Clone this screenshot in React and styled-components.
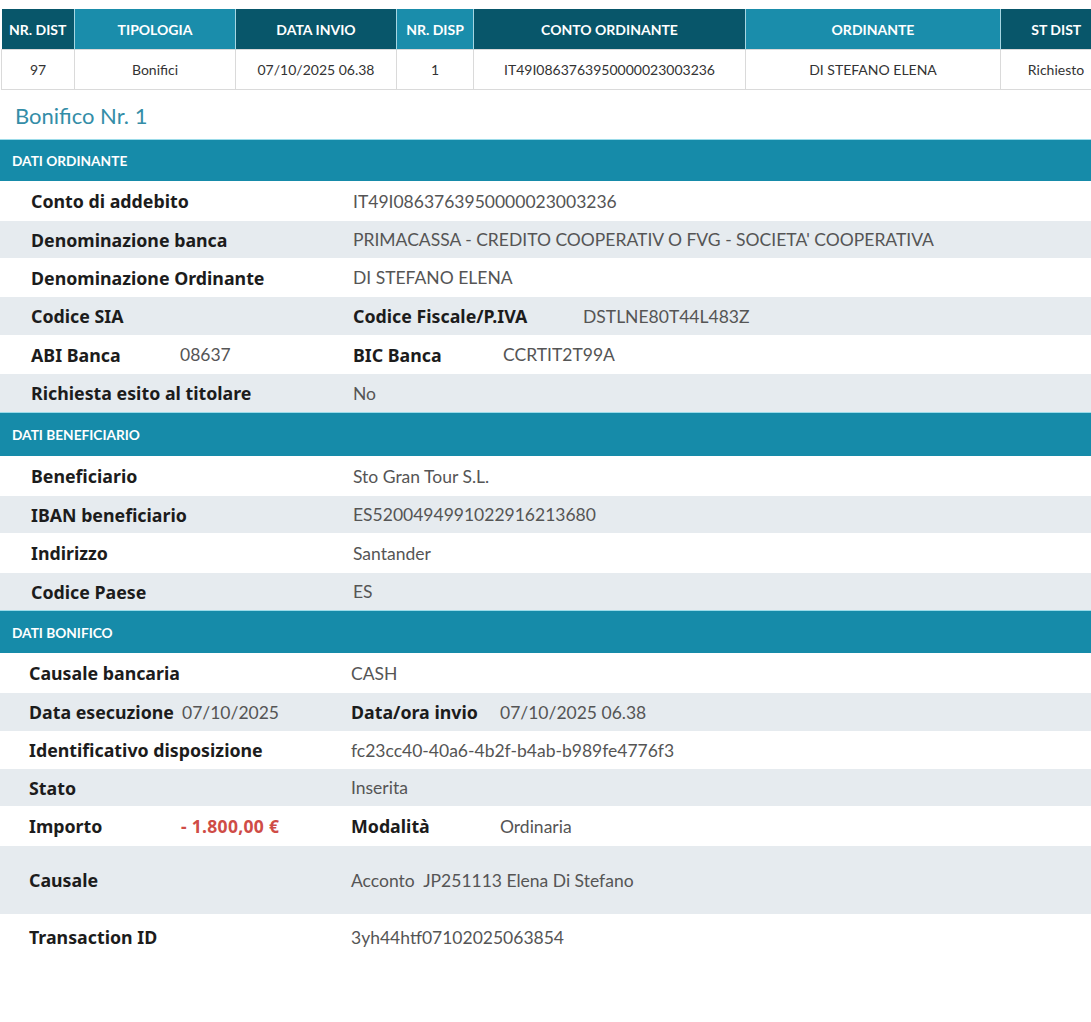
import React from 'react';
import styled, { createGlobalStyle } from 'styled-components';

const Global = createGlobalStyle`
  html, body { margin: 0; padding: 0; background: #fff; }
  body { font-family: Lato, "Open Sans", sans-serif; overflow: hidden; }
`;

const Page = styled.div`
  width: 1091px;
  overflow: hidden;
  padding-top: 9px;
`;

const TopTable = styled.table`
  border-collapse: collapse;
  table-layout: fixed;
  width: 1110px;
  margin-left: 1px;
`;

const Th = styled.th`
  background: ${p => (p.$dark ? '#08566a' : '#1a8dab')};
  color: #fff;
  font-weight: 700;
  font-size: 14px;
  height: 40px;
  padding: 0;
  text-align: center;
  border-left: 1px solid #a6d6e2;
  white-space: nowrap;
  &:first-child { border-left: none; }
`;

const Td = styled.td`
  height: 39px;
  font-size: 14px;
  color: #333;
  text-align: center;
  border: 1px solid #dadada;
  padding: 0;
  white-space: nowrap;
`;

const Title = styled.h2`
  margin: 0;
  height: 49px;
  display: flex;
  align-items: center;
  padding-left: 15px;
  padding-top: 1px;
  box-sizing: border-box;
  font-weight: 400;
  font-size: 22px;
  color: #348da7;
`;

const SectionBar = styled.div`
  box-sizing: border-box;
  height: ${p => p.$h}px;
  background: #168ba9;
  border-top: 1px solid #9bdbe9;
  display: flex;
  align-items: center;
  padding-left: 12px;
  color: #fff;
  font-weight: 700;
  font-size: 13.7px;
  text-transform: uppercase;
`;

const Row = styled.div`
  display: flex;
  align-items: center;
  height: ${p => p.$h}px;
  background: ${p => (p.$alt ? '#e6ebef' : '#fff')};
  padding-left: ${p => p.$indent}px;
`;

const Label = styled.div`
  flex: none;
  width: ${p => (p.$w ? `${p.$w}px` : 'auto')};
  font-family: "Noto Sans", "Open Sans", sans-serif;
  font-weight: 700;
  font-size: 17.8px;
  color: #1c1c1c;
  white-space: nowrap;
`;

const Value = styled.div`
  flex: none;
  width: ${p => (p.$w ? `${p.$w}px` : 'auto')};
  font-size: 17.5px;
  color: #555;
  white-space: nowrap;
`;

const Amount = styled(Value)`
  font-family: "Noto Sans", "Open Sans", sans-serif;
  color: #cf4c46;
  font-weight: 700;
  font-size: 17.5px;
  letter-spacing: 0.3px;
`;

const columns = [
  { t: 'NR. DIST', w: 73, dark: true, v: '97' },
  { t: 'TIPOLOGIA', w: 161, v: 'Bonifici' },
  { t: 'DATA INVIO', w: 161, dark: true, v: '07/10/2025 06.38' },
  { t: 'NR. DISP', w: 77, v: '1' },
  { t: 'CONTO ORDINANTE', w: 272, dark: true, v: 'IT49I0863763950000023003236' },
  { t: 'ORDINANTE', w: 255, v: 'DI STEFANO ELENA' },
  { t: 'ST DIST', w: 111, dark: true, v: 'Richiesto' },
];

export default function App() {
  return (
    <Page>
      <Global />
      <TopTable>
        <colgroup>
          {columns.map(c => <col key={c.t} style={{ width: c.w }} />)}
        </colgroup>
        <thead>
          <tr>
            {columns.map(c => <Th key={c.t} $dark={c.dark}>{c.t}</Th>)}
          </tr>
        </thead>
        <tbody>
          <tr>
            {columns.map(c => <Td key={c.t}>{c.v}</Td>)}
          </tr>
        </tbody>
      </TopTable>

      <Title>Bonifico Nr. 1</Title>

      <SectionBar $h={42}>Dati ordinante</SectionBar>
      <Row $h={40} $indent={31}>
        <Label $w={322}>Conto di addebito</Label>
        <Value>IT49I0863763950000023003236</Value>
      </Row>
      <Row $h={37} $indent={31} $alt>
        <Label $w={322}>Denominazione banca</Label>
        <Value>PRIMACASSA - CREDITO COOPERATIV O FVG - SOCIETA' COOPERATIVA</Value>
      </Row>
      <Row $h={39} $indent={31}>
        <Label $w={322}>Denominazione Ordinante</Label>
        <Value>DI STEFANO ELENA</Value>
      </Row>
      <Row $h={38} $indent={31} $alt>
        <Label $w={322}>Codice SIA</Label>
        <Label $w={230}>Codice Fiscale/P.IVA</Label>
        <Value>DSTLNE80T44L483Z</Value>
      </Row>
      <Row $h={39} $indent={31}>
        <Label $w={149}>ABI Banca</Label>
        <Value $w={173}>08637</Value>
        <Label $w={150}>BIC Banca</Label>
        <Value>CCRTIT2T99A</Value>
      </Row>
      <Row $h={38} $indent={31} $alt>
        <Label $w={322}>Richiesta esito al titolare</Label>
        <Value>No</Value>
      </Row>

      <SectionBar $h={44}>Dati beneficiario</SectionBar>
      <Row $h={40} $indent={31}>
        <Label $w={322}>Beneficiario</Label>
        <Value>Sto Gran Tour S.L.</Value>
      </Row>
      <Row $h={37} $indent={31} $alt>
        <Label $w={322}>IBAN beneficiario</Label>
        <Value>ES5200494991022916213680</Value>
      </Row>
      <Row $h={40} $indent={31}>
        <Label $w={322}>Indirizzo</Label>
        <Value>Santander</Value>
      </Row>
      <Row $h={37} $indent={31} $alt>
        <Label $w={322}>Codice Paese</Label>
        <Value>ES</Value>
      </Row>

      <SectionBar $h={43}>Dati bonifico</SectionBar>
      <Row $h={40} $indent={29}>
        <Label $w={322}>Causale bancaria</Label>
        <Value>CASH</Value>
      </Row>
      <Row $h={38} $indent={29} $alt>
        <Label $w={153}>Data esecuzione</Label>
        <Value $w={169}>07/10/2025</Value>
        <Label $w={149}>Data/ora invio</Label>
        <Value>07/10/2025 06.38</Value>
      </Row>
      <Row $h={38} $indent={29}>
        <Label $w={322}>Identificativo disposizione</Label>
        <Value>fc23cc40-40a6-4b2f-b4ab-b989fe4776f3</Value>
      </Row>
      <Row $h={37} $indent={29} $alt>
        <Label $w={322}>Stato</Label>
        <Value>Inserita</Value>
      </Row>
      <Row $h={40} $indent={29}>
        <Label $w={152}>Importo</Label>
        <Amount $w={170}>- 1.800,00 €</Amount>
        <Label $w={149}>Modalità</Label>
        <Value>Ordinaria</Value>
      </Row>
      <Row $h={68} $indent={29} $alt>
        <Label $w={322}>Causale</Label>
        <Value>Acconto&nbsp; JP251113 Elena Di Stefano</Value>
      </Row>
      <Row $h={46} $indent={29}>
        <Label $w={322}>Transaction ID</Label>
        <Value>3yh44htf07102025063854</Value>
      </Row>
    </Page>
  );
}
